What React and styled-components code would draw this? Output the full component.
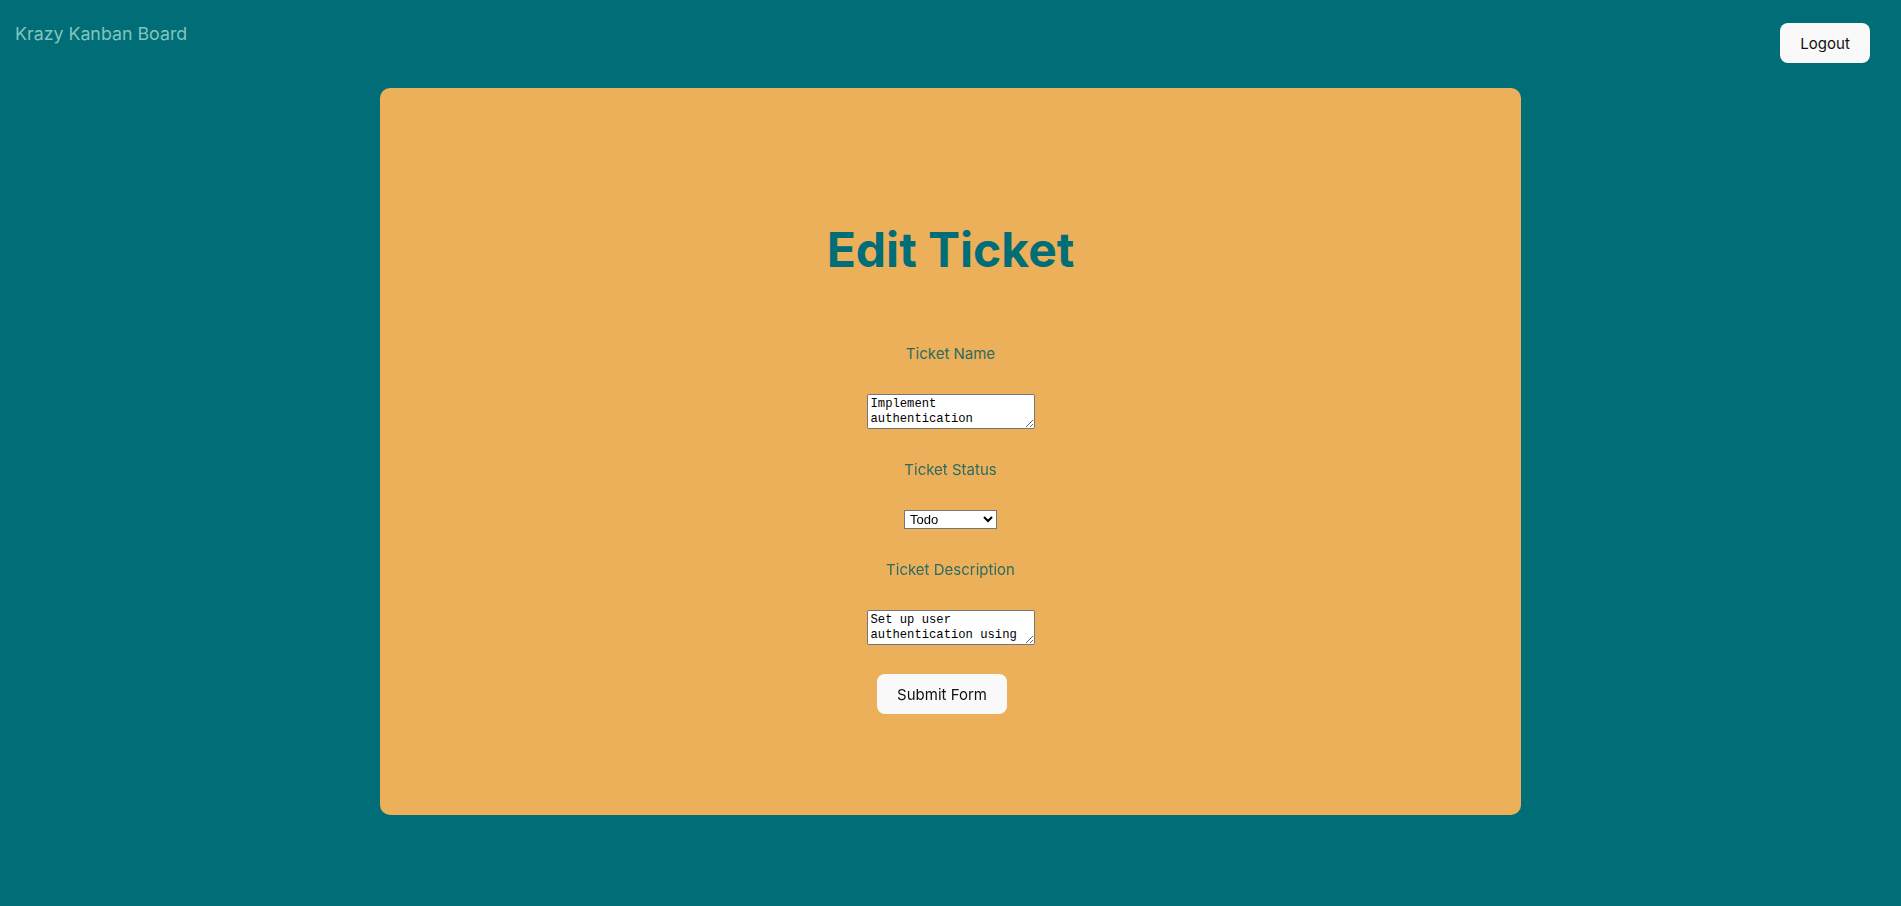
import React, { useState } from 'react';
import styled, { createGlobalStyle } from 'styled-components';

const GlobalStyle = createGlobalStyle`
  html, body {
    margin: 0;
    padding: 0;
    background-color: #006d77;
    font-family: Inter, "Noto Sans", system-ui, sans-serif;
  }
  #root {
    min-height: 100vh;
  }
`;

const Page = styled.div`
  min-height: 906px;
  display: flex;
  flex-direction: column;
`;

const Nav = styled.nav`
  display: flex;
  justify-content: space-between;
  align-items: flex-start;
  padding: 0 31px 0 15px;
  height: 88px;
`;

const Brand = styled.h2`
  margin: 0;
  padding-top: 23px;
  font-size: 17.8px;
  font-weight: 400;
  color: #83c5be;
`;

const Button = styled.button`
  border-radius: 8px;
  border: 1px solid transparent;
  padding: 0.64em 1.28em;
  font-size: 15px;
  font-weight: 400;
  font-family: inherit;
  background-color: #f9f9f9;
  color: #111;
  cursor: pointer;
  margin-top: ${p => p.$top || 0}px;
`;

const Card = styled.section`
  width: 60%;
  margin: 0 auto;
  height: 727px;
  box-sizing: border-box;
  background-color: #edb05a;
  border-radius: 10px;
  display: flex;
  flex-direction: column;
  align-items: center;
  padding-top: 132px;
`;

const Title = styled.h1`
  margin: 0 0 65px;
  font-size: 48px;
  font-weight: 700;
  color: #006d77;
  line-height: normal;
`;

const Form = styled.form`
  display: flex;
  flex-direction: column;
  align-items: center;
  gap: 31px;
`;

const Label = styled.label`
  font-size: 15px;
  font-weight: 400;
  color: #2c6b60;
  line-height: 19px;
`;

const TextArea = styled.textarea`
  box-sizing: border-box;
  width: 168px;
  height: 35px;
  padding: 2px 3px;
  border: 1px solid #767676;
  border-radius: 2px;
  font-family: "Liberation Mono", "DejaVu Sans Mono", monospace;
  font-size: 12.2px;
  line-height: 15px;
  background: #fff;
  color: #000;
  overflow-y: ${p => (p.$scroll ? 'scroll' : 'auto')};
`;

const Select = styled.select`
  box-sizing: border-box;
  width: 93px;
  height: 19px;
  font-family: "Liberation Sans", Arial, sans-serif;
  font-size: 13px;
  border: 1px solid #767676;
  border-radius: 0;
  background: #fff;
  color: #000;
  padding: 0 0 0 1px;
`;

const SubmitRow = styled.div`
  margin-top: -2px;
  margin-right: 17px;
`;

export default function App() {
  const [name, setName] = useState('Implement authentication');
  const [status, setStatus] = useState('Todo');
  const [desc, setDesc] = useState('Set up user authentication using JWT tokens for secure access to the application.');

  return (
    <Page>
      <GlobalStyle />
      <Nav>
        <Brand>Krazy Kanban Board</Brand>
        <Button $top={23}>Logout</Button>
      </Nav>
      <Card>
        <Title>Edit Ticket</Title>
        <Form onSubmit={e => e.preventDefault()}>
          <Label htmlFor="tName">Ticket Name</Label>
          <TextArea id="tName" value={name} onChange={e => setName(e.target.value)} />
          <Label htmlFor="tStatus">Ticket Status</Label>
          <Select id="tStatus" value={status} onChange={e => setStatus(e.target.value)}>
            <option value="Todo">Todo</option>
            <option value="In Progress">In Progress</option>
            <option value="Done">Done</option>
          </Select>
          <Label htmlFor="tDesc">Ticket Description</Label>
          <TextArea id="tDesc" $scroll value={desc} onChange={e => setDesc(e.target.value)} />
          <SubmitRow>
            <Button type="submit">Submit Form</Button>
          </SubmitRow>
        </Form>
      </Card>
    </Page>
  );
}
